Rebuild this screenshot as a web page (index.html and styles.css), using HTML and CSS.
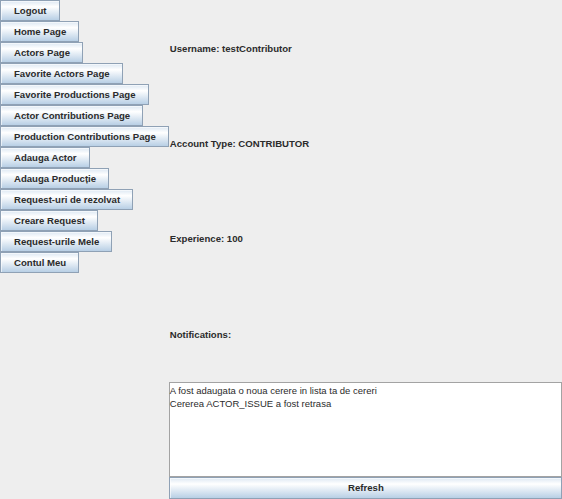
FILE: index.html
```html
<!DOCTYPE html>
<html>
<head>
<meta charset="utf-8">
<link rel="stylesheet" href="styles.css">
</head>
<body>
<div class="frame">
  <div class="menu">
    <button class="btn">Logout</button>
    <button class="btn">Home Page</button>
    <button class="btn">Actors Page</button>
    <button class="btn">Favorite Actors Page</button>
    <button class="btn">Favorite Productions Page</button>
    <button class="btn">Actor Contributions Page</button>
    <button class="btn">Production Contributions Page</button>
    <button class="btn">Adauga Actor</button>
    <button class="btn">Adauga Producție</button>
    <button class="btn">Request-uri de rezolvat</button>
    <button class="btn">Creare Request</button>
    <button class="btn">Request-urile Mele</button>
    <button class="btn">Contul Meu</button>
  </div>
  <div class="content">
    <div class="grid">
      <div class="label">Username: testContributor</div>
      <div class="label">Account Type: CONTRIBUTOR</div>
      <div class="label">Experience: 100</div>
      <div class="label">Notifications:</div>
      <div class="notes">
        <div class="line">A fost adaugata o noua cerere in lista ta de cereri</div>
        <div class="line">Cererea ACTOR_ISSUE a fost retrasa</div>
      </div>
    </div>
    <button class="btn refresh">Refresh</button>
  </div>
</div>
</body>
</html>
```
FILE: styles.css
```css
html, body {
  margin: 0;
  padding: 0;
  background: #eeeeee;
}
body {
  width: 562px;
  height: 499px;
  overflow: hidden;
  font-family: "Liberation Sans", Arial, sans-serif;
  color: #333333;
}
.frame {
  display: flex;
  height: 499px;
}
.menu {
  display: flex;
  flex-direction: column;
  align-items: flex-start;
}
.btn {
  box-sizing: border-box;
  height: 21px;
  margin: 0;
  padding: 0 12px 0 13px;
  border: 1px solid #8fa1b5;
  border-radius: 0;
  background: linear-gradient(#dde8f3, #ffffff 30%, #b8cfe5);
  box-shadow: inset 1px 1px 0 rgba(255,255,255,0.6);
  font-family: "Liberation Sans", Arial, sans-serif;
  font-weight: bold;
  font-size: 9.6px;
  color: #2b2b2b;
  text-align: left;
  white-space: nowrap;
  line-height: 19px;
}
.content {
  flex: 1;
  display: flex;
  flex-direction: column;
  min-width: 0;
}
.grid {
  flex: 1;
  display: grid;
  grid-template-rows: repeat(5, 1fr);
  min-height: 0;
}
.label {
  display: flex;
  align-items: center;
  padding: 1px 0 0 1px;
  font-weight: bold;
  font-size: 9.6px;
  color: #2b2b2b;
}
.notes {
  box-sizing: border-box;
  background: #ffffff;
  border: 1px solid #a3a3a3;
  padding: 1px 0 0 0;
  font-size: 9.5px;
  line-height: 13px;
  color: #2b2b2b;
}
.refresh {
  width: 100%;
  height: 22px;
  text-align: center;
  line-height: 20px;
}
```
